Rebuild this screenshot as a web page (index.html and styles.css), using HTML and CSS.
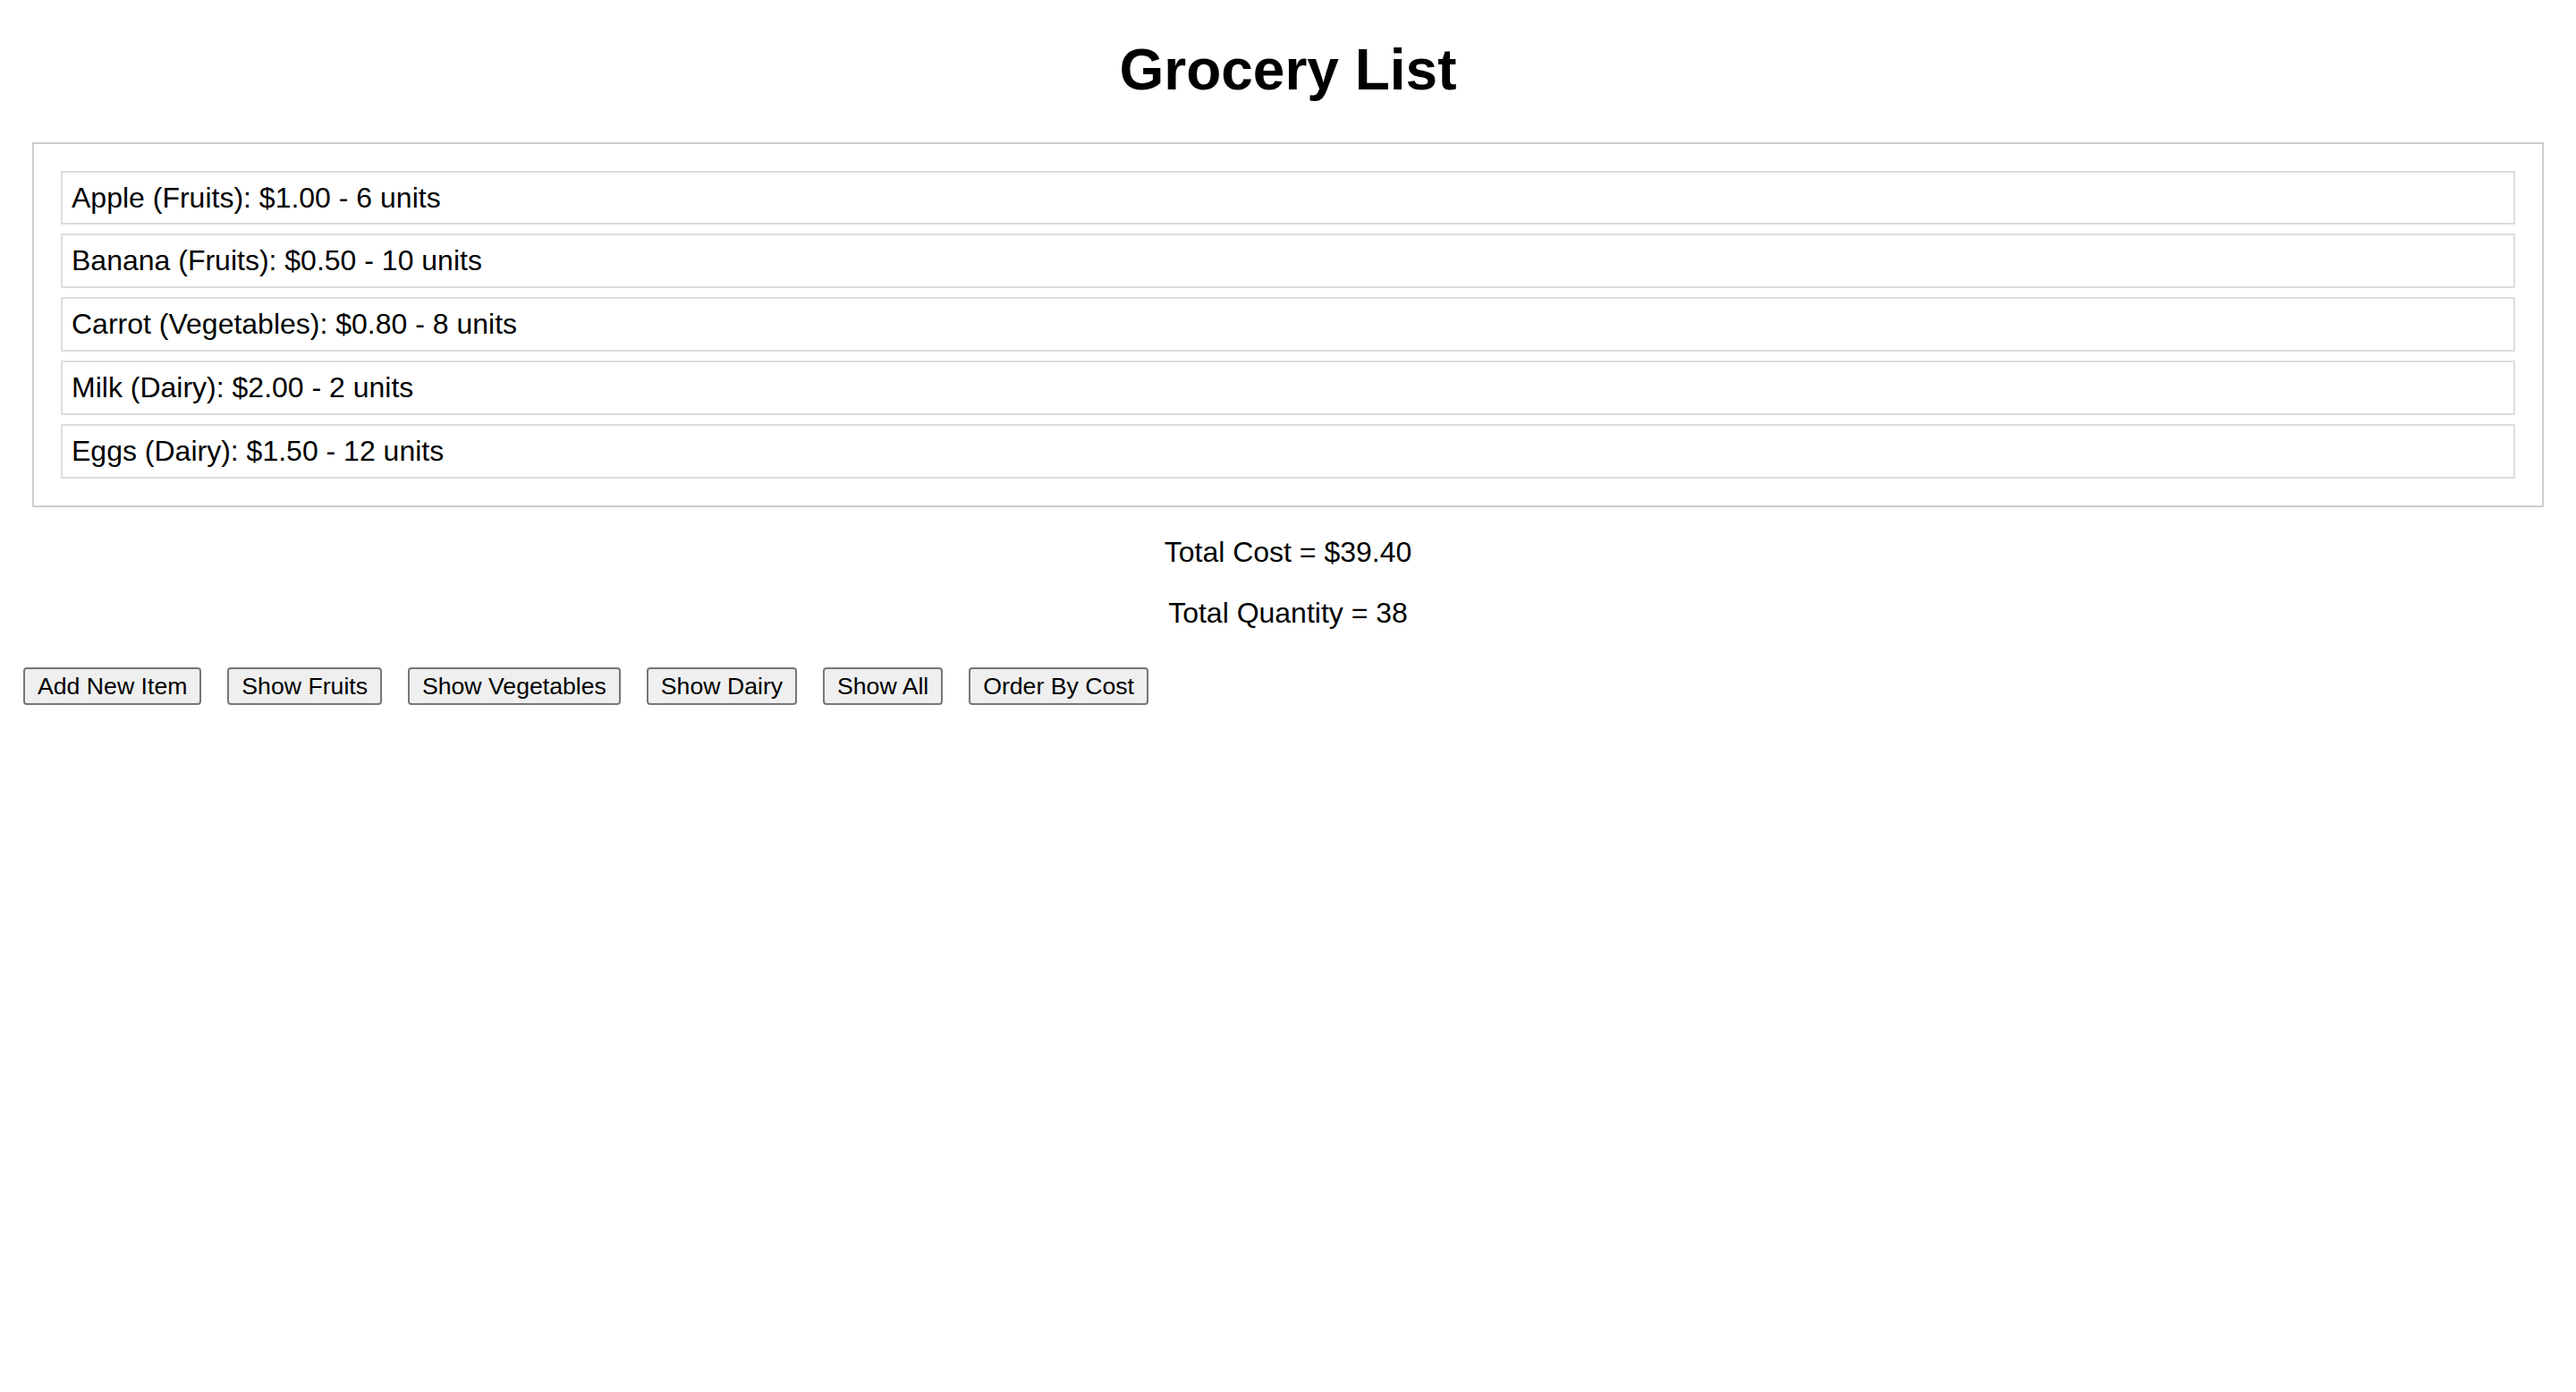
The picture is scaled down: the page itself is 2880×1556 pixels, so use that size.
FILE: index.html
```html
<!DOCTYPE html>
<html lang="en">
<head>
<meta charset="utf-8">
<title>Grocery List</title>
<link rel="stylesheet" href="styles.css">
</head>
<body>
<h1 class="title">Grocery List</h1>
<div class="list">
  <div class="item">Apple (Fruits): $1.00 - 6 units</div>
  <div class="item">Banana (Fruits): $0.50 - 10 units</div>
  <div class="item">Carrot (Vegetables): $0.80 - 8 units</div>
  <div class="item">Milk (Dairy): $2.00 - 2 units</div>
  <div class="item">Eggs (Dairy): $1.50 - 12 units</div>
</div>
<p class="total">Total Cost = $39.40</p>
<p class="total">Total Quantity = 38</p>
<div class="actions">
  <button class="btn">Add New Item</button>
  <button class="btn">Show Fruits</button>
  <button class="btn">Show Vegetables</button>
  <button class="btn">Show Dairy</button>
  <button class="btn">Show All</button>
  <button class="btn">Order By Cost</button>
</div>
</body>
</html>
```
FILE: styles.css
```css
html {
  background: #fff;
}
body {
  margin: 16px;
  font-family: "Liberation Sans", Arial, Helvetica, sans-serif;
  font-size: 32px;
  color: #000;
}
.title {
  font-size: 64px;
  font-weight: bold;
  text-align: center;
  margin: 26px 0 43px;
  line-height: 1.15;
}
.list {
  margin: 20px;
  padding: 20px;
  border: 2px solid #cccccc;
}
.item {
  margin: 10px;
  padding: 10px 10px;
  border: 2px solid #dddddd;
  font-size: 32px;
  line-height: 36.8px;
}
.total {
  text-align: center;
  font-size: 32px;
  line-height: 36.8px;
  margin: 32px 0;
}
.actions {
  font-size: 32px;
}
.btn {
  margin: 10px;
  padding: 4px 14px;
  font-family: "Liberation Sans", Arial, Helvetica, sans-serif;
  font-size: 26.67px;
  line-height: 30px;
  color: #000;
  background: #efefef;
  border: 2px solid #767676;
  border-radius: 4px;
}
```
